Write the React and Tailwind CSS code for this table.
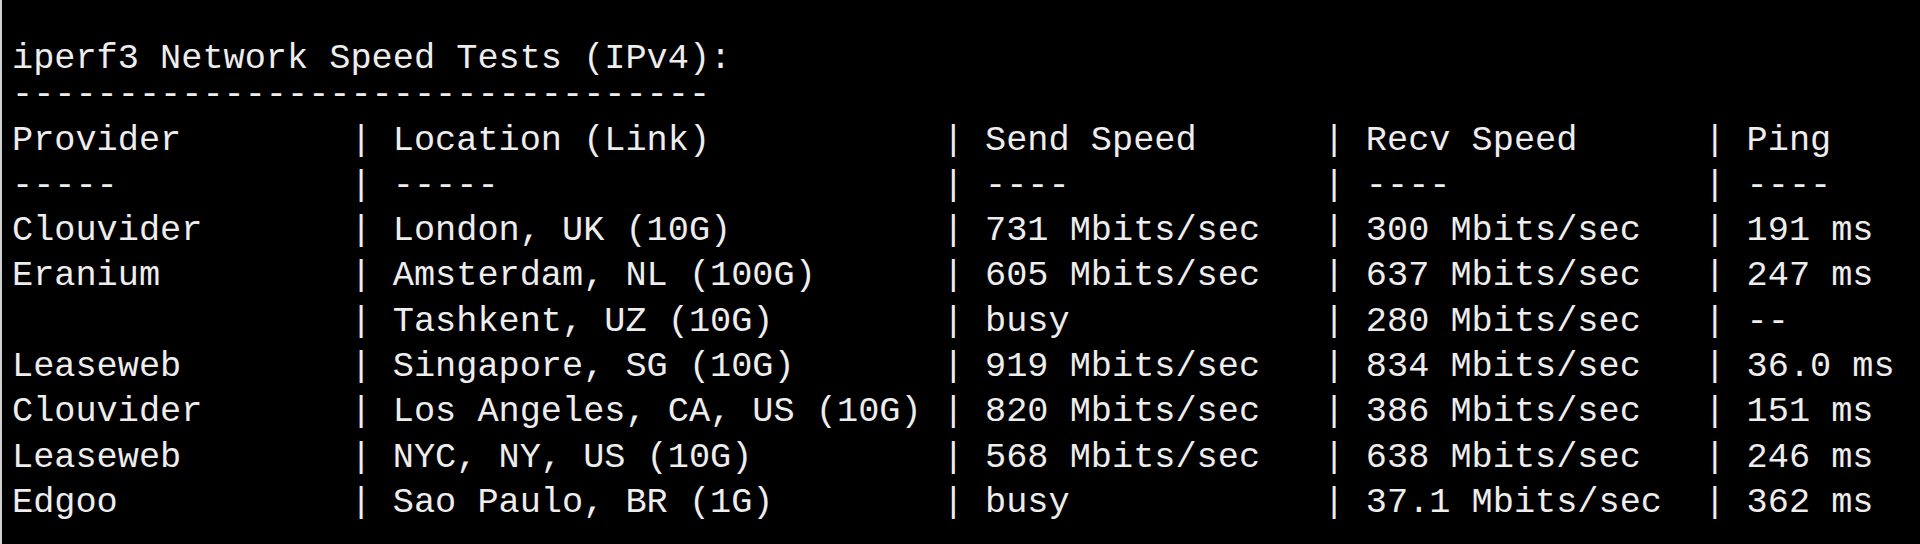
const rows = [
  ['Provider', 'Location (Link)', 'Send Speed', 'Recv Speed', 'Ping'],
  ['-----', '-----', '----', '----', '----'],
  ['Clouvider', 'London, UK (10G)', '731 Mbits/sec', '300 Mbits/sec', '191 ms'],
  ['Eranium', 'Amsterdam, NL (100G)', '605 Mbits/sec', '637 Mbits/sec', '247 ms'],
  ['', 'Tashkent, UZ (10G)', 'busy', '280 Mbits/sec', '--'],
  ['Leaseweb', 'Singapore, SG (10G)', '919 Mbits/sec', '834 Mbits/sec', '36.0 ms'],
  ['Clouvider', 'Los Angeles, CA, US (10G)', '820 Mbits/sec', '386 Mbits/sec', '151 ms'],
  ['Leaseweb', 'NYC, NY, US (10G)', '568 Mbits/sec', '638 Mbits/sec', '246 ms'],
  ['Edgoo', 'Sao Paulo, BR (1G)', 'busy', '37.1 Mbits/sec', '362 ms'],
];

// printf "%-15s | %-25s | %-15s | %-15s | %-15s"
const fmt = (r) =>
  [r[0].padEnd(15), r[1].padEnd(25), r[2].padEnd(15), r[3].padEnd(15), r[4]].join(' | ');

export default function App() {
  return (
    <div className="flex w-[1920px] h-[544px] bg-black overflow-hidden">
      <div className="w-[2px] shrink-0 bg-[#cfcfcf]" />
      <div
        className="pl-[10px] pt-[28px] text-[35.25px] leading-[45.3px] text-[#ededed] whitespace-pre"
        style={{ fontFamily: '"Liberation Mono", monospace' }}
      >
        <div className="mt-[9px] -mb-[9px]">iperf3 Network Speed Tests (IPv4):</div>
        <div>---------------------------------</div>
        {rows.map((r, i) => (
          <div key={i}>{fmt(r)}</div>
        ))}
      </div>
    </div>
  );
}
